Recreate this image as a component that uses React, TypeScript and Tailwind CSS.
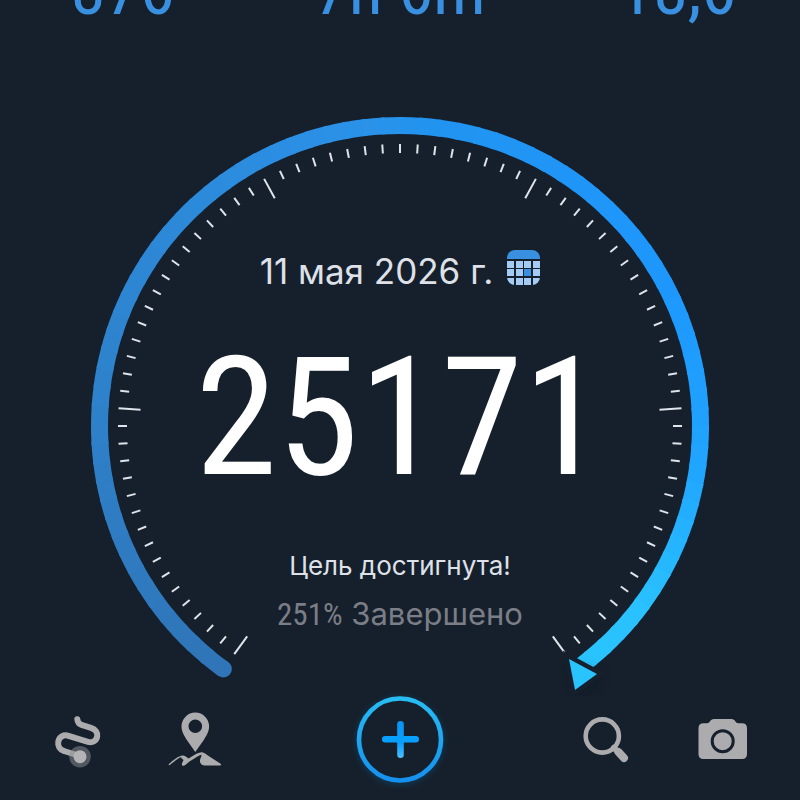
import type { ReactNode } from "react";

const stats = [
  { label: "Калории", value: "876" },
  { label: "Время", value: "7h 6m" },
  { label: "Км", value: "18,6" },
];

// Dial geometry, degrees are clockwise from twelve o'clock
const CX = 320;
const CY = 320;
const START = -144;
const SWEEP = 288;
const STEPS = 80;

const stops = [
  { at: 0, rgb: [47, 117, 184] },
  { at: 0.25, rgb: [46, 132, 207] },
  { at: 0.48, rgb: [42, 146, 233] },
  { at: 0.52, rgb: [33, 148, 240] },
  { at: 0.72, rgb: [30, 151, 253] },
  { at: 0.84, rgb: [32, 164, 255] },
  { at: 0.94, rgb: [41, 192, 255] },
  { at: 1, rgb: [41, 196, 255] },
];

function point(deg: number, r: number) {
  const a = (deg * Math.PI) / 180;
  return { x: CX + r * Math.sin(a), y: CY - r * Math.cos(a) };
}

function colorAt(t: number) {
  const i = Math.max(1, stops.findIndex((s) => s.at >= t));
  const a = stops[i - 1];
  const b = stops[i];
  const k = (t - a.at) / (b.at - a.at);
  const c = a.rgb.map((v, n) => Math.round(v + (b.rgb[n] - v) * k));
  return `rgb(${c.join(",")})`;
}

function Dial() {
  const segments = Array.from({ length: STEPS }, (_, i) => {
    const from = point(START + (i * SWEEP) / STEPS, 300.5);
    const to = point(START + ((i + (i < STEPS - 1 ? 1.2 : 1)) * SWEEP) / STEPS, 300.5);
    return { d: `M${from.x} ${from.y}A300.5 300.5 0 0 1 ${to.x} ${to.y}`, color: colorAt(i / (STEPS - 1)) };
  });
  const ticks = Array.from({ length: STEPS + 1 }, (_, i) => {
    const deg = START + (i * SWEEP) / STEPS;
    return { a: point(deg, i % 16 === 0 ? 260 : 273), b: point(deg, 282) };
  });
  const cap = point(START, 300.5);

  return (
    <svg viewBox="0 0 640 590" className="col-start-1 row-start-1 w-full" aria-hidden="true">
      <defs>
        <filter id="arrowShadow" x="-100%" y="-100%" width="300%" height="300%">
          <feGaussianBlur stdDeviation="7" />
        </filter>
      </defs>
      <circle cx={cap.x} cy={cap.y} r="8.5" fill={colorAt(0)} />
      {segments.map((s) => (
        <path key={s.d} d={s.d} fill="none" stroke={s.color} strokeWidth="17" />
      ))}
      {ticks.map((t, i) => (
        <line key={i} x1={t.a.x} y1={t.a.y} x2={t.b.x} y2={t.b.y} stroke="#dfe3ea" strokeWidth="2" />
      ))}
      <path d="M495 562L520 570L500 590Z" fill="#0c131c" opacity="0.5" filter="url(#arrowShadow)" />
      <path d="M489 553L517 568L495 584Z" fill="#29c3fd" stroke="#16202c" strokeWidth="9" paintOrder="stroke" />
    </svg>
  );
}

function CalendarIcon() {
  const cols = [0, 9, 17, 26];
  const rows = [11, 19, 28];
  return (
    <svg viewBox="0 0 33 35" className="h-[35px] w-[33px]" aria-hidden="true">
      <clipPath id="calendarShape">
        <rect width="33" height="35" rx="8" />
      </clipPath>
      <g clipPath="url(#calendarShape)">
        <rect width="33" height="9" fill="#3a90e0" />
        {rows.map((y, r) =>
          cols.map((x, c) => (
            <rect key={`${r}-${c}`} x={x} y={y} width="7" height="7" fill={r === 1 && c === 2 ? "#3a90e0" : "#a3cbf3"} />
          ))
        )}
      </g>
    </svg>
  );
}

function RouteIcon() {
  return (
    <svg viewBox="0 0 56 56" className="size-14" aria-hidden="true">
      <path
        d="M27.3 7.2C27.6 10.2 28.8 12 31.5 12.8L41 15.8C45.5 17.3 47.8 20.5 47.2 24.2C46.5 28.8 42.5 31.2 38 29.9L18.5 23.8C13.5 22.3 9.2 24.7 8.3 29.5C7.5 34 9.8 37.8 14 39L30 44"
        fill="none"
        stroke="#acacae"
        strokeWidth="6"
        strokeLinecap="round"
      />
      <circle cx="30" cy="44.7" r="10.8" fill="#8d8f96" fillOpacity="0.5" />
      <circle cx="30" cy="44.7" r="6.5" fill="#b4b4b6" />
    </svg>
  );
}

function MapIcon() {
  return (
    <svg viewBox="0 0 56 56" className="size-14" fill="#acacae" aria-hidden="true">
      <path
        fillRule="evenodd"
        d="M29.3 0.6A13.8 13.8 0 0 0 15.5 14.4C15.5 19.5 18.5 24 21 28.2L29.3 40L37.6 28.2C40.1 24 43.1 19.5 43.1 14.4A13.8 13.8 0 0 0 29.3 0.6ZM29.3 7.4A6.8 6.8 0 1 1 29.3 21A6.8 6.8 0 1 1 29.3 7.4Z"
      />
      <path d="M2.8 52.2C6.5 48.8 12 44.2 16 43.5C18.5 43.2 20.4 45 22.8 46.4C26.5 44 32 40.4 35.6 40.3C37.5 40.3 39.5 41.8 41.5 43.2L54.6 51.7Q56 53.4 54 53.6L39 53.6C35 53.2 33.2 50.5 34.2 47.2C34.6 45.5 35.6 44.3 35.4 42.8C31.5 44 25 48.5 18.5 53.4Q16 54.5 15.8 52.2C16.1 50 17.8 49 17.3 47.8C16.8 46.8 15 46.7 15.2 45C11.5 46.5 7.5 50 3.6 53.2Q2.2 53.5 2.8 52.2Z" />
    </svg>
  );
}

function SearchIcon() {
  return (
    <svg viewBox="0 0 56 56" className="size-14" fill="none" stroke="#acacae" strokeLinecap="round" aria-hidden="true">
      <circle cx="24.3" cy="24" r="16.6" strokeWidth="4.6" />
      <path d="M36 35.7L40 40" strokeWidth="6" />
      <path d="M40.5 40L46 46" strokeWidth="8" />
    </svg>
  );
}

function CameraIcon() {
  return (
    <svg viewBox="0 0 56 56" className="size-14" fill="#acacae" aria-hidden="true">
      <path d="M9.5 11.3H13C16 11.3 16 7 20 7H37.4C41.4 7 41.4 11.3 44.4 11.3H48Q53 11.3 53 16.3V42Q53 47 48 47H9.5Q4.5 47 4.5 42V16.3Q4.5 11.3 9.5 11.3Z" />
      <circle cx="28.7" cy="29.2" r="10.5" fill="none" stroke="#16202c" strokeWidth="3" />
    </svg>
  );
}

function AddIcon() {
  return (
    <svg viewBox="0 0 88 88" className="size-[88px] overflow-visible" fill="none" aria-hidden="true">
      <defs>
        <linearGradient id="addRing" x1="0" y1="0" x2="0" y2="1">
          <stop offset="0" stopColor="#27bdf3" />
          <stop offset="1" stopColor="#1590ee" />
        </linearGradient>
        <linearGradient id="addPlus" gradientUnits="userSpaceOnUse" x1="0" y1="26" x2="0" y2="62">
          <stop offset="0" stopColor="#0c93f5" />
          <stop offset="0.6" stopColor="#08a0ff" />
          <stop offset="1" stopColor="#4cc0fa" />
        </linearGradient>
        <filter id="addGlow" x="-20%" y="-20%" width="140%" height="140%">
          <feGaussianBlur stdDeviation="3" />
        </filter>
      </defs>
      <circle cx="44" cy="45" r="41" stroke="#0d6fb5" strokeWidth="4" opacity="0.45" filter="url(#addGlow)" />
      <circle cx="44" cy="43.5" r="41" fill="#16202c" stroke="url(#addRing)" strokeWidth="4.6" />
      <rect x="26" y="40" width="37" height="6.6" rx="3.3" fill="#08a0ff" />
      <rect x="41.2" y="25" width="6.6" height="37" rx="3.3" fill="url(#addPlus)" />
    </svg>
  );
}

function NavButton({ label, children }: { label: string; children: ReactNode }) {
  return (
    <button type="button" aria-label={label} className="block">
      {children}
    </button>
  );
}

export default function App() {
  return (
    <main className="flex min-h-screen flex-col overflow-hidden bg-[#16202c] font-['Inter',sans-serif]">
      {/* stats row, scrolled partly out of view */}
      <section className="-mx-4 -mt-[50px] grid grid-cols-3 text-center font-['Roboto_Condensed','Roboto',sans-serif] text-[70px] leading-[80px] text-[#3a90e0]">
        {stats.map((s) => (
          <p key={s.label} aria-label={s.label}>{s.value}</p>
        ))}
      </section>

      <section className="mx-auto mt-[76px] grid w-full max-w-[640px]">
        <Dial />
        <div className="col-start-1 row-start-1 flex flex-col items-center pt-[140px]">
          <div className="flex items-start gap-3.5">
            <p className="text-[35px] leading-[50px] text-[#dfe1e8]">11 мая 2026 г.</p>
            <button type="button" aria-label="Календарь" className="mt-1">
              <CalendarIcon />
            </button>
          </div>
          <p className="mt-6 font-['Roboto_Condensed','Roboto',sans-serif] text-[166px] leading-[196px] text-white">25171</p>
          <p className="mt-8 text-[26px] leading-9 text-[#dfe1e8]">Цель достигнута!</p>
          <p className="mt-3 text-[31px] leading-9 text-[#7b7e86]">
            <span className="font-['Roboto_Condensed','Roboto',sans-serif]">251%</span> Завершено
          </p>
        </div>
      </section>

      <nav className="flex items-center px-[50px]">
        <div className="flex flex-1 gap-[60px]">
          <NavButton label="Маршрут"><RouteIcon /></NavButton>
          <NavButton label="Карта"><MapIcon /></NavButton>
        </div>
        <NavButton label="Добавить"><AddIcon /></NavButton>
        <div className="flex flex-1 justify-end gap-[60px]">
          <NavButton label="Поиск"><SearchIcon /></NavButton>
          <NavButton label="Камера"><CameraIcon /></NavButton>
        </div>
      </nav>
    </main>
  );
}
